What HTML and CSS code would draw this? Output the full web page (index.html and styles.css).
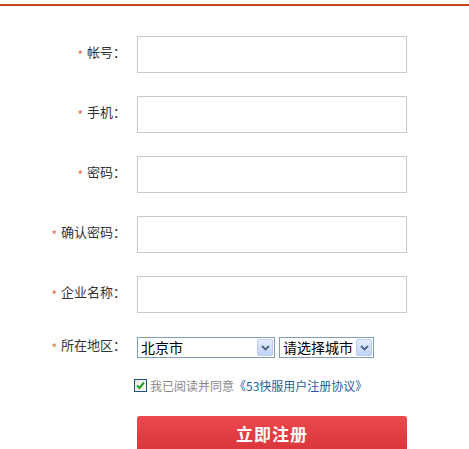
FILE: index.html
```html
<!DOCTYPE html>
<html lang="zh-CN">
<head>
<meta charset="utf-8">
<title>注册</title>
<link rel="stylesheet" href="styles.css">
</head>
<body>
<div class="topline"></div>
<form class="form">
  <div class="row">
    <label class="label"><span class="req">*</span>帐号：</label>
    <input class="input" type="text">
  </div>
  <div class="row">
    <label class="label"><span class="req">*</span>手机：</label>
    <input class="input" type="text">
  </div>
  <div class="row">
    <label class="label"><span class="req">*</span>密码：</label>
    <input class="input" type="password">
  </div>
  <div class="row">
    <label class="label"><span class="req">*</span>确认密码：</label>
    <input class="input" type="password">
  </div>
  <div class="row">
    <label class="label"><span class="req">*</span>企业名称：</label>
    <input class="input" type="text">
  </div>
  <div class="row row-region">
    <label class="label"><span class="req">*</span>所在地区：</label>
    <div class="selects">
      <div class="select select-province">
        <span class="select-text">北京市</span>
        <span class="select-btn"><svg width="9" height="6" viewBox="0 0 9 6"><path d="M1 1 L4.5 4.5 L8 1" fill="none" stroke="#4d6185" stroke-width="1.8"/></svg></span>
      </div>
      <div class="select select-city">
        <span class="select-text">请选择城市</span>
        <span class="select-btn"><svg width="9" height="6" viewBox="0 0 9 6"><path d="M1 1 L4.5 4.5 L8 1" fill="none" stroke="#4d6185" stroke-width="1.8"/></svg></span>
      </div>
    </div>
  </div>
  <div class="row row-agree">
    <span class="checkbox"><svg width="9" height="9" viewBox="0 0 9 9"><path d="M1 4.5 L3.5 7 L8 1.5" fill="none" stroke="#21a121" stroke-width="2"/></svg></span>
    <span class="agree-text">我已阅读并同意</span><a class="agree-link" href="#">《53快服用户注册协议》</a>
  </div>
  <div class="row row-submit">
    <button class="submit" type="button">立即注册</button>
  </div>
</form>
</body>
</html>
```
FILE: styles.css
```css
html, body {
  margin: 0;
  padding: 0;
  background: #ffffff;
}
body {
  font-family: "Noto Sans CJK SC", "Liberation Sans", sans-serif;
  color: #333;
}
.topline {
  margin-top: 4px;
  height: 2px;
  background: #c2421d;
}
.form {
  padding-top: 30px;
  display: flex;
  flex-direction: column;
}
.row {
  display: flex;
  align-items: center;
  height: 37px;
  margin-bottom: 23px;
}
.label {
  width: 126px;
  text-align: right;
  font-size: 13px;
  line-height: 13px;
  color: #333;
  margin-right: 11px;
  padding-bottom: 3px;
  white-space: nowrap;
}
.req {
  color: #e56b3f;
  margin-right: 4px;
  font-size: 12px;
  vertical-align: -3px;
}
.input {
  box-sizing: border-box;
  width: 270px;
  height: 37px;
  border: 1px solid #c9c9c9;
  margin: 0;
  padding: 0 6px;
  outline: none;
  background: #fff;
}
.row-region {
  height: 21px;
  margin-top: 1px;
  margin-bottom: 20px;
}
.selects {
  display: flex;
  gap: 4px;
}
.select {
  box-sizing: border-box;
  height: 21px;
  border: 1px solid #7f9db9;
  display: flex;
  align-items: center;
  justify-content: space-between;
  padding: 0 1px 0 3px;
  font-size: 14px;
  color: #000;
  background: #fff;
}
.select-province {
  width: 138px;
}
.select-city {
  width: 95px;
}
.select-text {
  line-height: 17px;
}
.select-btn {
  box-sizing: border-box;
  width: 16px;
  height: 17px;
  border: 1px solid #b8cbf0;
  border-radius: 2px;
  background: linear-gradient(#e4ecfd, #c2d3fb);
  display: flex;
  align-items: center;
  justify-content: center;
}
.row-agree {
  height: 14px;
  margin-bottom: 24px;
  padding-left: 134px;
  font-size: 12px;
}
.checkbox {
  box-sizing: border-box;
  width: 13px;
  height: 13px;
  border: 1px solid #1c5180;
  background: linear-gradient(135deg, #e6e6e0, #fff);
  display: flex;
  align-items: center;
  justify-content: center;
  margin-right: 3px;
}
.agree-text {
  color: #888;
}
.agree-link {
  color: #1f5d9c;
  text-decoration: none;
}
.row-submit {
  height: 40px;
  padding-left: 137px;
  margin-bottom: 0;
}
.submit {
  width: 270px;
  height: 40px;
  border: 0;
  border-radius: 3px;
  background: linear-gradient(#ea4a4e, #d73237);
  color: #fff;
  font-family: "Noto Sans CJK SC", "Liberation Sans", sans-serif;
  font-size: 17px;
  line-height: 17px;
  font-weight: bold;
  letter-spacing: 1px;
  padding: 0 0 6px 0;
}
```
